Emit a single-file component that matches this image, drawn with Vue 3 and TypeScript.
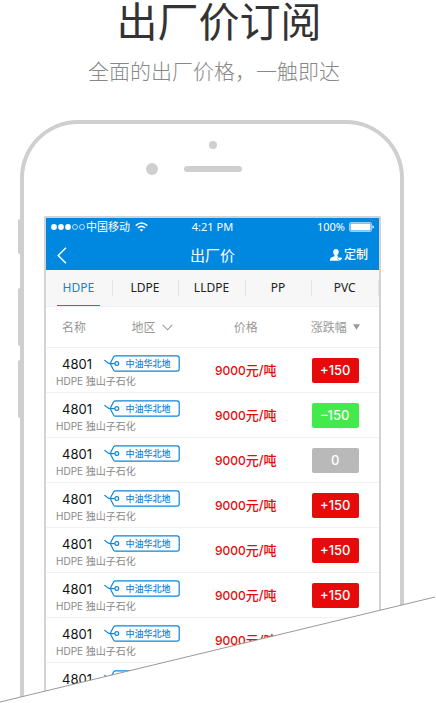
<script setup lang="ts">
import { ref } from 'vue'

interface Quote {
  id: number
  grade: string
  maker: string
  region: string
  price: string
  unit: string
  change: number
}

const tabs: string[] = ['HDPE', 'LDPE', 'LLDPE', 'PP', 'PVC']
const active = ref<string>('HDPE')

const changes: number[] = [150, -150, 0, 150, 150, 150, 150, 150]
const quotes: Quote[] = changes.map((change, id) => ({
  id,
  grade: '4801',
  maker: 'HDPE 独山子石化',
  region: '中油华北地',
  price: '9000',
  unit: '元/吨',
  change,
}))

function label(n: number): string {
  if (n > 0) return `+${n}`
  if (n < 0) return `–${-n}`
  return '0'
}

function tone(n: number): string {
  return n > 0 ? 'up' : n < 0 ? 'down' : 'flat'
}
</script>

<template>
  <main class="promo">
    <header class="intro">
      <h1>出厂价订阅</h1>
      <p>全面的出厂价格，一触即达</p>
    </header>

    <section class="phone">
      <i class="key mute"></i>
      <i class="key vol-up"></i>
      <i class="key vol-down"></i>
      <div class="bezel">
        <i class="sensor"></i>
        <div class="ear">
          <i class="camera"></i>
          <i class="speaker"></i>
        </div>
      </div>

      <div class="screen">
        <div class="top">
          <div class="status">
            <span class="carrier">
              <svg width="35" height="8" viewBox="0 0 35 8">
                <g fill="#fff">
                  <circle cx="3" cy="4" r="2.9" />
                  <circle cx="10" cy="4" r="2.9" />
                  <circle cx="17" cy="4" r="2.9" />
                </g>
                <g fill="none" stroke="#fff" stroke-width=".7">
                  <circle cx="24" cy="4" r="2.5" />
                  <circle cx="31" cy="4" r="2.5" />
                </g>
              </svg>
              <span>中国移动</span>
              <svg class="wifi" width="13" height="10" viewBox="0 0 13 10" fill="none" stroke="#fff" stroke-width="1.5">
                <path d="M.7 3.6Q6.5-1.6 12.3 3.6" />
                <path d="M2.8 6Q6.5 2.7 10.2 6" />
                <path d="M4.7 7.7Q6.5 6.2 8.3 7.7L6.5 9.6Z" fill="#fff" stroke="none" />
              </svg>
            </span>
            <span class="time">4:21 PM</span>
            <span class="power">
              <span>100%</span>
              <svg width="25" height="10" viewBox="0 0 25 10">
                <rect x=".5" y=".5" width="22" height="9" rx="1.5" fill="none" stroke="#fff" stroke-opacity=".6" />
                <rect x="1.5" y="1.5" width="20" height="7" rx=".5" fill="#fff" />
                <path d="M23.5 3.2Q25 3.8 25 5T23.5 6.8Z" fill="#fff" />
              </svg>
            </span>
          </div>
          <div class="nav">
            <button class="back" type="button" aria-label="返回">
              <svg width="10" height="17" viewBox="0 0 10 17" fill="none" stroke="#fff" stroke-width="1.4">
                <path d="M9 .8L1.2 8.5L9 16.2" />
              </svg>
            </button>
            <h2>出厂价</h2>
            <button class="custom" type="button">
              <svg width="12" height="12" viewBox="0 0 12 12" fill="#fff">
                <path d="M6 0C7.8 0 8.8 1.3 8.7 3.1C8.6 4.6 8 5.4 7.4 6.1C7.3 7.2 7.7 7.5 8.6 7.9C7.3 8.3 7.3 9.6 8.2 10.5L9.5 11.8H0C0 9.6.4 8.9 2 8.3C3.8 7.7 4.6 7.3 4.5 6.1C3.8 5.4 3.3 4.6 3.2 3.1C3.1 1.3 4.2 0 6 0Z" />
                <path d="M10 11.8L8.1 9.8C7.6 8.7 9.2 7.8 10 8.9C10.8 7.8 12.4 8.7 11.9 9.8Z" />
              </svg>
              <span>定制</span>
            </button>
          </div>
        </div>

        <nav class="tabs">
          <button
            v-for="tab in tabs"
            :key="tab"
            type="button"
            :class="{ on: tab === active }"
            @click="active = tab"
          >
            <span>{{ tab }}</span>
          </button>
        </nav>

        <table>
          <colgroup>
            <col class="c-name" />
            <col class="c-region" />
            <col class="c-price" />
            <col class="c-change" />
          </colgroup>
          <thead>
            <tr>
              <th class="name">名称</th>
              <th class="region">
                <span class="sort">
                  地区
                  <svg width="11" height="7" viewBox="0 0 11 7" fill="none" stroke="#999" stroke-width="1.1">
                    <path d="M.7.8L5.5 5.8L10.3.8" />
                  </svg>
                </span>
              </th>
              <th class="price">价格</th>
              <th class="change">
                <span class="sort">
                  涨跌幅
                  <svg width="7" height="6" viewBox="0 0 7 6" fill="#999"><path d="M0 .3H7L3.5 5.8Z" /></svg>
                </span>
              </th>
            </tr>
          </thead>
          <tbody>
            <tr v-for="q in quotes" :key="q.id">
              <td class="name">
                <strong>{{ q.grade }}</strong>
                <small>{{ q.maker }}</small>
              </td>
              <td class="region">
                <span class="tag">
                  <svg width="76" height="17" viewBox="0 0 76 17" fill="none" stroke="#0a87dd" stroke-width="1.2">
                    <path d="M11.5.8H73Q75.2.8 75.2 3V14Q75.2 16.2 73 16.2H11.5Q10.3 16.2 9.7 15.2L7 10.2Q6.2 8.5 7 6.8L9.7 1.8Q10.3.8 11.5.8Z" />
                    <circle cx="12.8" cy="8.5" r="1.9" />
                    <path d="M.3 5.2C2.2 5.8 2.8 8 5 8.3Q7.5 8.7 10.8 8.5" />
                  </svg>
                  <span>{{ q.region }}</span>
                </span>
              </td>
              <td class="price">{{ q.price }}<span class="unit">{{ q.unit }}</span></td>
              <td class="change"><span class="badge" :class="tone(q.change)">{{ label(q.change) }}</span></td>
            </tr>
          </tbody>
        </table>
      </div>
    </section>

    <svg class="cut" viewBox="0 0 436 108" preserveAspectRatio="none" aria-hidden="true">
      <path d="M0 107L435 2H436V108H0Z" fill="#fff" />
      <path d="M0 107L435 2" fill="none" stroke="#999" stroke-width="1" />
    </svg>
  </main>
</template>

<style>
body {
  margin: 0;
  background: #fff;
}
</style>

<style scoped>
.promo {
  position: relative;
  height: 100vh;
  overflow: hidden;
  font-family: "Noto Sans", "Noto Sans CJK SC", sans-serif;
  color: #222;
}

.intro {
  height: 120px;
  text-align: center;
}

h1,
h2,
p {
  margin: 0;
  font-weight: 400;
}

h1 {
  padding-left: 2px;
  font: 400 41px/38px "Noto Sans CJK SC", sans-serif;
  color: #333;
}

.intro p {
  padding: 17px 8px 0 0;
  font: 300 21px/30px "Noto Sans CJK SC", sans-serif;
  color: #888;
}

.phone {
  position: relative;
  box-sizing: border-box;
  margin: 0 32px 0 20px;
  padding: 0 19px 0 20px;
  border: 4px solid #cfcfcf;
  border-bottom: 0;
  border-radius: 58px 58px 0 0;
}

.key {
  position: absolute;
  left: -6px;
  width: 3px;
  background: #cfcfcf;
  border-radius: 2px 0 0 2px;
}

.mute {
  top: 95px;
  height: 35px;
}

.vol-up {
  top: 164px;
  height: 58px;
}

.vol-down {
  top: 236px;
  height: 58px;
}

.bezel {
  display: flex;
  flex-direction: column;
  align-items: center;
  gap: 14px;
  height: 75px;
  padding-top: 17px;
}

.sensor,
.camera,
.speaker {
  background: #cfcfcf;
  border-radius: 6px;
}

.sensor {
  width: 8px;
  height: 8px;
}

.ear {
  display: flex;
  align-items: center;
  gap: 26px;
  padding-right: 38px;
}

.camera {
  width: 12px;
  height: 12px;
}

.speaker {
  width: 58px;
  height: 6px;
}

.screen {
  border: 2px solid #d3d3d3;
  border-bottom: 0;
  border-radius: 2px 2px 0 0;
}

.top {
  color: #fff;
  background: #0088e0;
}

.status,
.nav {
  display: grid;
  grid-template-columns: 1fr auto 1fr;
  align-items: center;
}

.status {
  height: 18px;
  padding: 0 5px;
  font-size: 11px;
  line-height: 18px;
}

.carrier,
.power {
  display: flex;
  align-items: center;
}

.wifi {
  margin-left: 5px;
}

.power {
  justify-content: flex-end;
  gap: 4px;
}

.nav {
  height: 30px;
  padding: 4px 11px 0;
}

h2 {
  font-size: 15px;
  line-height: 30px;
}

button {
  padding: 0;
  border: 0;
  background: none;
  color: inherit;
  font: inherit;
  cursor: pointer;
}

.back,
.custom {
  display: flex;
  align-items: center;
}

.custom {
  justify-self: end;
  gap: 2px;
  font-size: 12px;
  line-height: 18px;
  font-weight: 500;
}

.tabs {
  display: flex;
  height: 37px;
  border-bottom: 1px solid #f0f0f0;
  box-sizing: border-box;
  background: #f7f7f7;
}

.tabs button {
  display: flex;
  flex: 1;
  align-items: center;
  justify-content: center;
  padding-right: 2px;
  background: linear-gradient(#e4e4e4, #e4e4e4) right center / 1px 16px no-repeat;
  font-size: 12px;
}

.tabs span {
  box-sizing: border-box;
  min-width: 43px;
  height: 36px;
  line-height: 35px;
  border-bottom: 1px solid transparent;
}

.tabs .on span {
  color: #0a87dd;
  border-bottom-color: #0a87dd;
}

table {
  width: 100%;
  table-layout: fixed;
  border-collapse: separate;
  border-spacing: 0;
}

.c-name {
  width: 17%;
}

.c-region {
  width: 28%;
}

.c-price {
  width: 30%;
}

th,
td {
  box-sizing: border-box;
  padding: 0;
  border-bottom: 1px solid #f2f2f2;
  text-align: left;
  white-space: nowrap;
  font-weight: 400;
}

th {
  height: 41px;
  color: #999;
  font-size: 12px;
}

th.name {
  padding-left: 16px;
}

th.region {
  padding-left: 29px;
}

td {
  height: 45px;
}

th.price,
td.price {
  text-align: center;
}

.sort {
  display: inline-flex;
  align-items: center;
  gap: 6px;
}

td.name {
  padding: 3px 0 0 10px;
}

td strong,
td small {
  display: block;
}

td strong {
  padding-left: 6px;
  font: 400 13px/18px Inter, sans-serif;
  color: #111;
}

td small {
  font: 400 10px/16px Inter, "Noto Sans CJK SC", sans-serif;
  color: #888;
}

td.region {
  vertical-align: top;
  padding: 7px 0 0 1px;
}

.tag {
  display: grid;
  width: 76px;
  color: #0a87dd;
  font: 500 9px/17px "Noto Sans CJK SC", sans-serif;
}

.tag > * {
  grid-area: 1 / 1;
}

.tag span {
  padding-left: 22px;
}

td.price {
  font: 500 12px/18px Inter, "Noto Sans CJK SC", sans-serif;
  color: #e60a0a;
}

.unit {
  font-size: 13px;
}

.change {
  padding-left: 16px;
}

th.change {
  padding-left: 15px;
}

.badge {
  display: block;
  width: 47px;
  border-radius: 2px;
  color: #fff;
  font: 500 13px/25px Inter, sans-serif;
  text-align: center;
}

.up {
  background: #e60a0a;
}

.down {
  background: #42ea4c;
}

.flat {
  background: #b9b9b9;
}

.cut {
  position: absolute;
  left: 0;
  bottom: 0;
  width: 100%;
  height: 108px;
}
</style>
